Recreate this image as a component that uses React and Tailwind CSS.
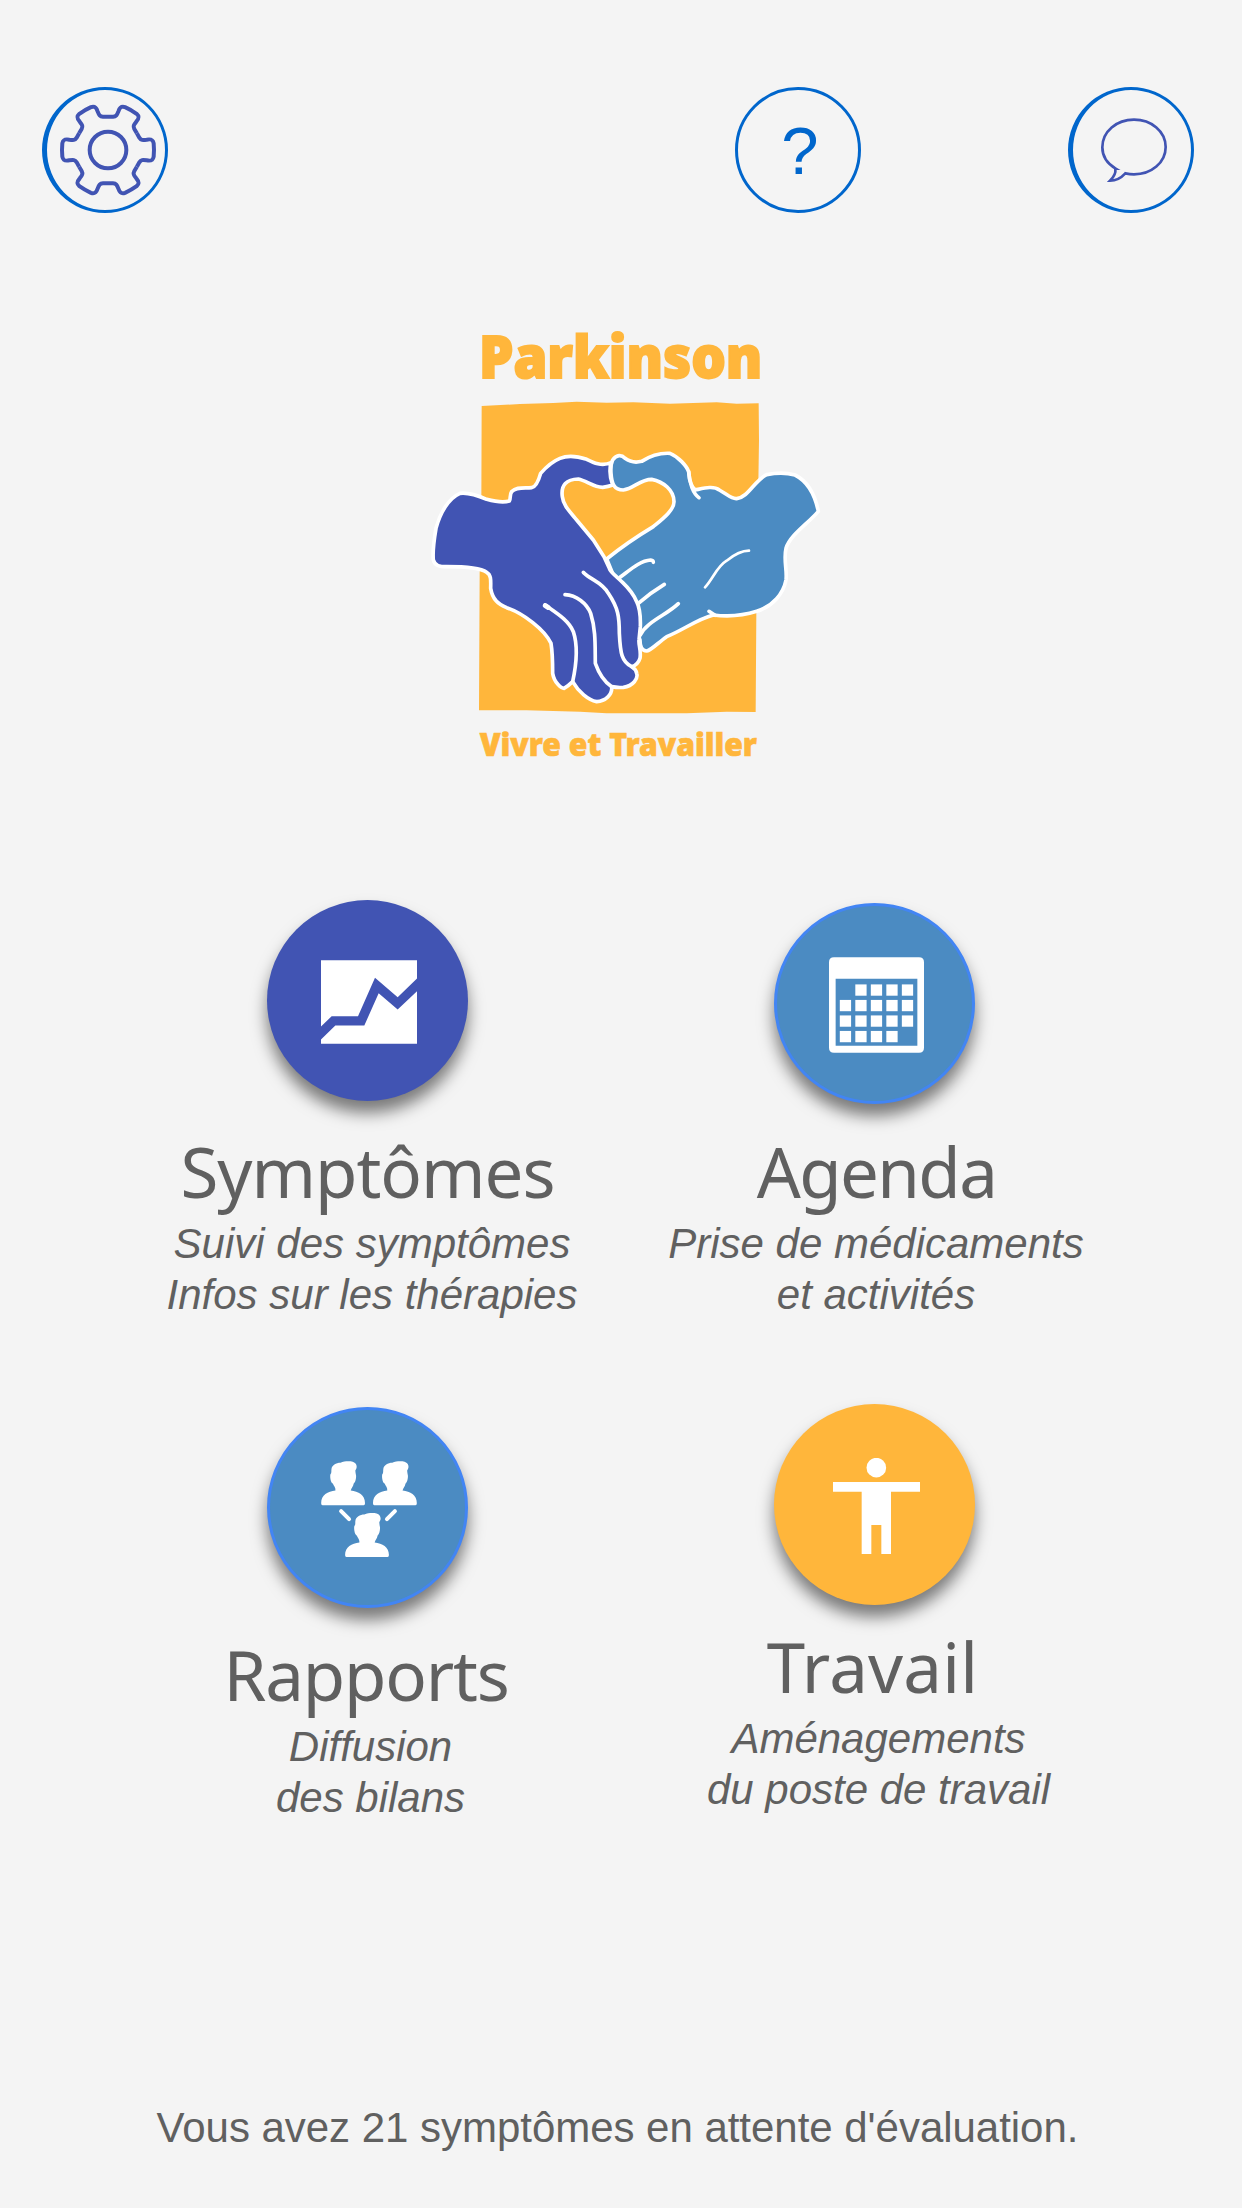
function GearIcon() {
    return (
        <svg className="ml-px h-[100px] w-[100px]" viewBox="-150 -150 300 300" fill="none" stroke="#4154b3" strokeWidth="12">
            {[30, 90, 150, 210, 270, 330].map((angle) => (
                <path
                    key={angle}
                    transform={`rotate(${angle})`}
                    d="M-50 -86.6L-37 -94C-29 -99 -29 -104 -31 -116C-34 -131 -30 -135 -20 -137Q0 -139 20 -137C30 -135 34 -131 31 -116C29 -104 29 -99 37 -94L50 -86.6"
                />
            ))}
            <circle r="55" />
        </svg>
    );
}

function ChatIcon() {
    return (
        <svg className="mr-[2px] h-[80px] w-[80px]" viewBox="0 0 240 240" fill="none" stroke="#4154b3" strokeWidth="8">
            <path d="M74 176C47 160 34 135 34 112C34 64 77 29 129 29C181 29 224 64 224 111C224 158 181 193 129 193C120 193 112 192 103 190C92 202 79 212 57 212C67 202 75 188 73 176Z" />
        </svg>
    );
}

function ChartIcon() {
    return (
        <svg className="h-[84px] w-[96px]" viewBox="0 0 288 251" fill="white">
            <path d="M0 0H288V55L230 111L162 53L111 168H32L0 199Z" />
            <path d="M0 238L43 196H130L173 99L230 148L288 93V251H0Z" />
        </svg>
    );
}

function CalendarIcon() {
    const cells = [];
    for (let row = 0; row < 4; row++) {
        for (let col = 0; col < 5; col++) {
            // first and last days fall outside the month
            if ((row === 0 && col === 0) || (row === 3 && col === 4)) continue;
            cells.push(<rect key={`${row}-${col}`} x={32.5 + col * 46.7} y={82 + row * 46.7} width="34" height="34" />);
        }
    }
    return (
        <svg className="h-[96px] w-[95px]" viewBox="0 0 286 288" fill="white">
            <path fillRule="evenodd" d="M15 0H271Q286 0 286 15V273Q286 288 271 288H15Q0 288 0 273V15Q0 0 15 0ZM20 65V267H266V65Z" />
            {cells}
        </svg>
    );
}

function Person({ x, y }) {
    return (
        <path
            transform={`translate(${x} ${y})`}
            d="M4 133Q0 133 0 127C0 102 20 92 43 89C44 80 38 75 35 68C28 66 26 45 28 40C32 36 30 30 31 25C32 12 45 5 58 5C70 0 85 0 95 2C108 6 110 20 103 28C103 34 104 38 105 43C106 52 103 64 98 68C96 78 91 82 89 89C112 92 132 102 132 127Q132 133 128 133Z"
        />
    );
}

function PeopleIcon() {
    return (
        <svg className="h-[96px] w-[96px]" viewBox="0 0 288 289" fill="white">
            <Person x={0} y={0} />
            <Person x={156} y={0} />
            <Person x={72} y={156} />
            <path d="M60 151L84 175M222 151L198 175" stroke="white" strokeWidth="12" strokeLinecap="round" />
        </svg>
    );
}

function BodyIcon() {
    return (
        <svg className="h-[96px] w-[87px]" viewBox="0 0 261 288" fill="white">
            <circle cx="130" cy="29" r="29.5" />
            <path d="M0 72H261V101H174V288H145V201H115V288H86V101H0Z" />
        </svg>
    );
}

function Logo() {
    return (
        <svg className="mt-[97px] ml-[420px] h-[460px] w-[410px]" viewBox="0 -390 1230 1380">
            <g fill="#ffb63b" stroke="#ffb63b" fontFamily="'Noto Sans', 'Open Sans', sans-serif" fontWeight="900">
                <text x="177" y="-185" fontSize="174" strokeWidth="6" textLength="850" lengthAdjust="spacingAndGlyphs">Parkinson</text>
                <text x="179" y="948" fontSize="97" strokeWidth="2" textLength="832" lengthAdjust="spacingAndGlyphs">Vivre et Travailler</text>
            </g>
            <path fill="#ffb63b" d="M185 -102L300 -108L400 -111L470 -115L560 -112L640 -113L750 -109L890 -113L950 -109L1016 -110L1017 0L1009 520L1007 816L920 815L800 820L560 820L480 815L320 811L177 811L179 400L184 200Z" />
            <g stroke="white" strokeWidth="11" strokeLinecap="round" strokeLinejoin="round" fill="none">
                {/* right hand */}
                <path
                    fill="#4b8bc2"
                    d="M578 60C590 43 605 44 615 55C630 66 650 68 665 64C690 48 715 38 750 40C775 50 800 78 806 95C808 120 812 140 826 150C850 145 880 136 898 150C920 162 935 178 950 176C985 172 1005 120 1040 104C1070 98 1100 98 1125 105C1165 125 1185 165 1195 214C1165 250 1110 285 1098 325C1090 360 1102 390 1098 420C1090 460 1060 498 1010 514C960 530 920 530 880 525C830 538 790 570 740 590C715 607 695 630 680 633C665 633 660 615 660 600L560 357C600 325 650 290 700 260C730 235 762 210 762 185C762 150 730 125 695 118C660 118 640 147 610 150C582 150 575 130 573 100C572 85 573 70 578 60Z"
                />
                <path d="M600 412C630 390 660 362 692 360Q700 361 700 367" />
                <path d="M655 490C680 468 700 453 733 433" />
                <path d="M661 585C680 545 740 525 775 491" />
                <path strokeWidth="8" d="M855 442C880 415 890 380 920 362C945 342 965 332 987 332" />
                <path d="M806 95C808 130 820 162 837 173" />
                <path d="M867 514L885 526" />
                {/* left hand */}
                <path
                    fill="#4154b3"
                    d="M573 68C545 80 520 68 500 58C470 48 445 45 420 55C395 65 375 85 362 100C355 125 345 142 335 143C310 145 290 140 275 155C268 165 273 175 268 183C245 190 215 182 200 178C170 165 145 157 120 160C85 175 60 220 48 265C42 300 38 340 40 360C45 378 60 380 80 380C130 380 180 383 200 397C215 405 212 425 212 445C218 480 235 492 260 503C310 520 375 570 393 610C398 640 398 660 398 700C403 730 425 745 432 745C445 738 453 730 458 725C475 755 505 780 530 785C555 783 578 765 575 740C590 743 600 743 610 742C640 738 655 715 650 700C648 688 640 683 635 680C648 677 656 668 660 655C664 630 655 615 657 600L661 560C662 530 660 505 650 485C635 450 615 435 600 420C580 400 570 395 568 385L552 350L520 300L470 240C445 210 430 195 427 170C422 135 440 118 475 117C500 122 520 142 548 142Q565 140 578 135C570 115 568 90 573 68Z"
                />
                <path d="M490 397C515 422 545 425 565 460C595 505 598 530 598 580C601 640 605 665 635 680" />
                <path d="M435 464C470 466 500 490 512 520C528 570 525 620 526 670C540 710 560 730 575 740" />
                <path d="M375 495C410 520 445 540 460 575C475 620 470 670 458 725" />
                <path strokeWidth="15" d="M376 497L384 502" />
            </g>
        </svg>
    );
}

function MenuItem({ title, lines, icon, circleClass, titleClass, textClass, className = "" }) {
    return (
        <div className={`flex flex-col items-center ${className}`}>
            <button className={`flex h-[201px] w-[201px] items-center justify-center rounded-full pt-[3px] pl-[3px] shadow-[0_12px_16px_rgba(0,0,0,0.5)] ${circleClass}`}>
                {icon}
            </button>
            <h2 className={`font-['Noto_Sans',sans-serif] text-[69px] leading-[80px] ${titleClass}`}>{title}</h2>
            <p className={`mt-[7px] text-center text-[42px] leading-[51px] italic ${textClass}`}>
                {lines[0]}
                <br />
                {lines[1]}
            </p>
        </div>
    );
}

export default function App() {
    return (
        <div className="flex h-[2208px] w-[1242px] flex-col bg-[#f4f4f4] font-['Liberation_Sans',Arial,sans-serif] text-[#606060]">
            <header className="flex pt-[87px] pl-[42px]">
                <button className="flex h-[126px] w-[126px] items-center justify-center rounded-full border-[3px] border-l-[5px] border-[#0066cc] pl-[2px]">
                    <GearIcon />
                </button>
                <button className="ml-[567px] flex h-[126px] w-[126px] items-center justify-center rounded-full border-[3px] border-[#0066cc] pl-[4px] text-[67px] leading-none text-[#0066cc]">
                    ?
                </button>
                <button className="ml-[207px] flex h-[126px] w-[126px] items-center justify-center rounded-full border-[3px] border-l-[5px] border-[#0066cc]">
                    <ChatIcon />
                </button>
            </header>

            <Logo />

            <main className="mt-[130px] grid grid-cols-2 px-[114px]">
                <MenuItem
                    title="Symptômes"
                    lines={["Suivi des symptômes", "Infos sur les thérapies"]}
                    icon={<ChartIcon />}
                    circleClass="bg-[#4154b3]"
                    titleClass="mt-[30px] tracking-[-1px]"
                    textClass="pl-[9px]"
                />
                <MenuItem
                    title="Agenda"
                    lines={["Prise de médicaments", "et activités"]}
                    icon={<CalendarIcon />}
                    circleClass="border-[3px] border-[#4285f4] bg-[#4b8bc2]"
                    titleClass="mt-[27px] pl-[4px] tracking-[-1.6px]"
                    textClass="pl-[3px]"
                    className="pt-[3px]"
                />
                <MenuItem
                    title="Rapports"
                    lines={["Diffusion", "des bilans"]}
                    icon={<PeopleIcon />}
                    circleClass="border-[3px] border-[#4285f4] bg-[#4b8bc2]"
                    titleClass="mt-[26px] mr-[3px] tracking-[-1.2px]"
                    textClass="pl-[6px]"
                    className="pt-[87px]"
                />
                <MenuItem
                    title="Travail"
                    lines={["Aménagements", "du poste de travail"]}
                    icon={<BodyIcon />}
                    circleClass="bg-[#ffb63b]"
                    titleClass="mt-[21px] mr-[4px] tracking-[0.2px]"
                    textClass="pl-[8px]"
                    className="pt-[84px]"
                />
            </main>

            <footer className="mt-auto pr-[7px] pb-[55px] text-center text-[42px] leading-[51px] tracking-[-0.03px]">
                Vous avez 21 symptômes en attente d'évaluation.
            </footer>
        </div>
    );
}
